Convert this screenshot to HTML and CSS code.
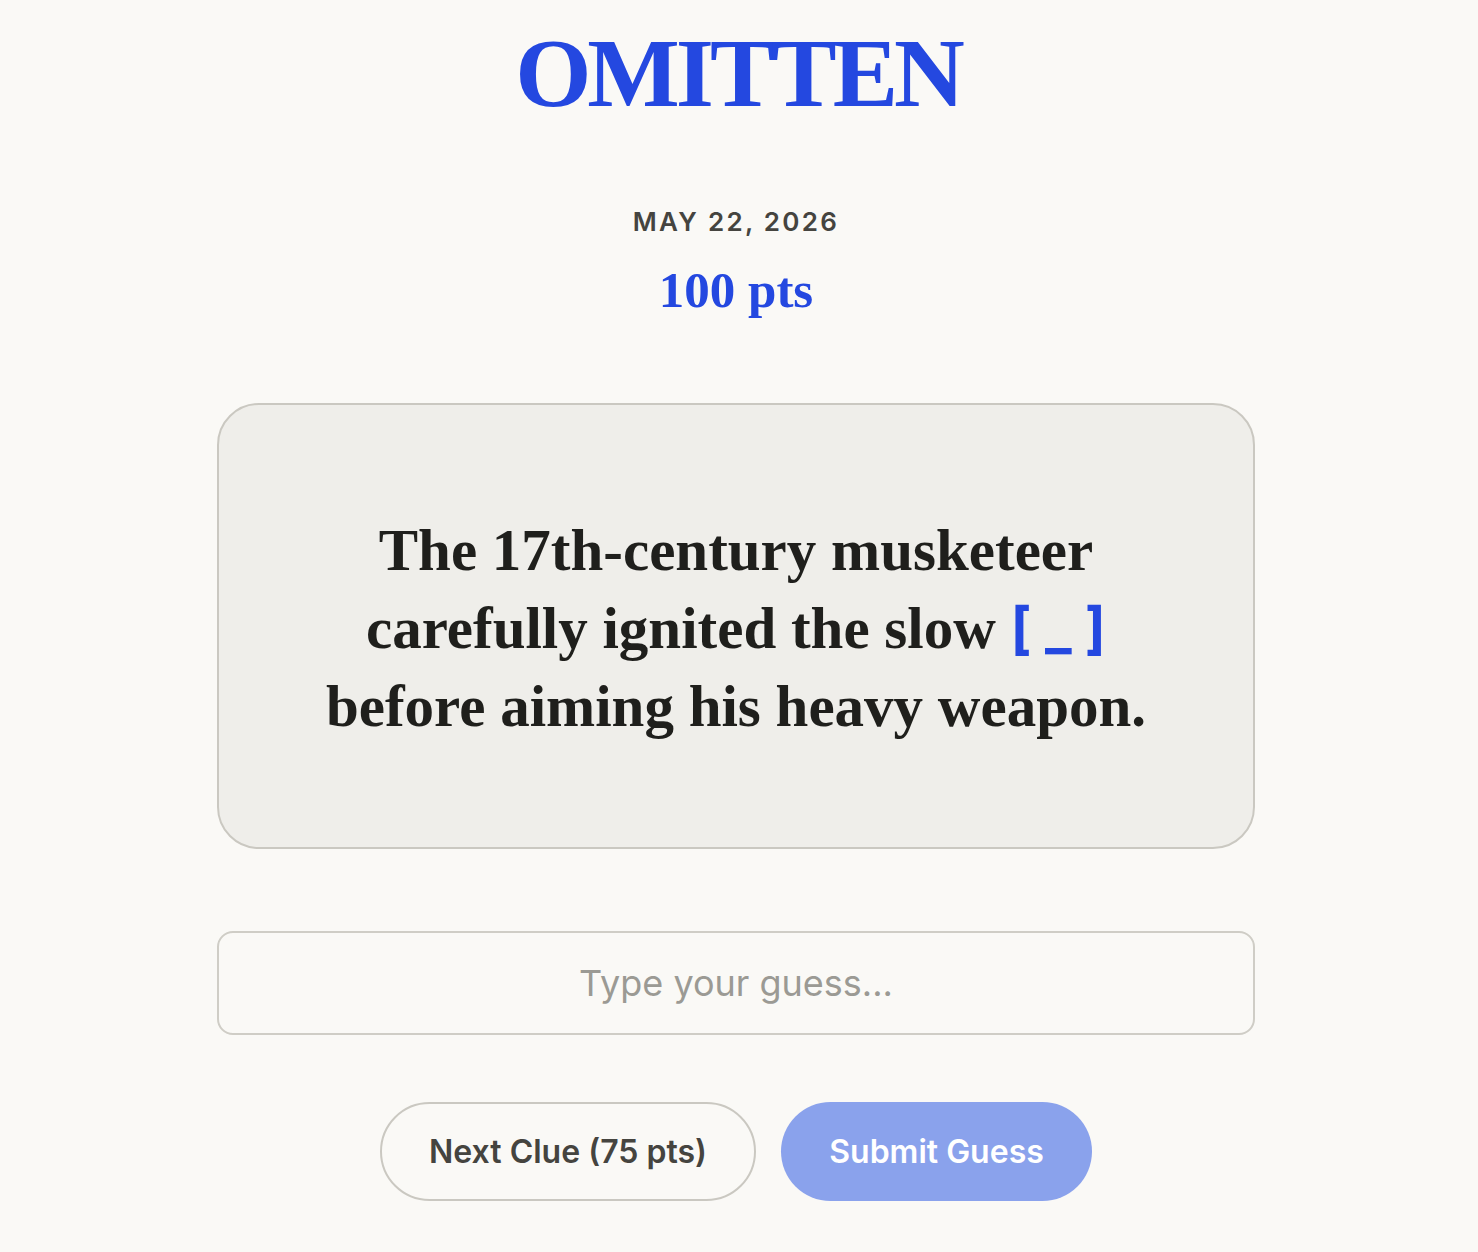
FILE: index.html
```html
<!DOCTYPE html>
<html lang="en">
<head>
<meta charset="utf-8">
<title>Omitten</title>
<link rel="stylesheet" href="styles.css">
</head>
<body>
<main class="page">
  <h1 class="logo">OMITTEN</h1>
  <div class="meta">
    <div class="date">MAY 22, 2026</div>
    <div class="points">100 pts</div>
  </div>
  <section class="card">
    <p class="clue">The 17th-century musketeer<br>carefully ignited the slow <span class="blank">[ _ ]</span><br>before aiming his heavy weapon.</p>
  </section>
  <input class="guess" type="text" placeholder="Type your guess...">
  <div class="actions">
    <button class="btn btn-secondary">Next Clue (75 pts)</button>
    <button class="btn btn-primary">Submit Guess</button>
  </div>
</main>
</body>
</html>
```

FILE: styles.css
```css
html, body {
  margin: 0;
  padding: 0;
  background: #faf9f6;
}

body {
  font-family: Inter, "Noto Sans", sans-serif;
  color: #1f1f1c;
  padding-right: 6px;
}

.page {
  width: 1038px;
  margin: 0 auto;
  display: flex;
  flex-direction: column;
  align-items: center;
  padding-top: 20px;
}

.logo {
  margin: 0;
  font-family: "Liberation Serif", "Times New Roman", serif;
  font-weight: 700;
  font-size: 98px;
  line-height: 106px;
  letter-spacing: -4px;
  padding-left: 4px;
  color: #2448e0;
}

.meta {
  display: flex;
  flex-direction: column;
  align-items: center;
  margin-top: 80px;
  gap: 24px;
}

.date {
  font-size: 26px;
  font-weight: 600;
  letter-spacing: 2.3px;
  color: #45443f;
  line-height: 32px;
}

.points {
  font-family: "Liberation Serif", "Times New Roman", serif;
  font-weight: 700;
  font-size: 51px;
  line-height: 56px;
  color: #2448e0;
}

.card {
  box-sizing: border-box;
  width: 100%;
  height: 446px;
  margin-top: 85px;
  border: 2px solid #cac8c1;
  border-radius: 42px;
  background: #efeeea;
  display: flex;
  align-items: center;
  justify-content: center;
}

.clue {
  margin: 0;
  text-align: center;
  font-family: "Liberation Serif", "Times New Roman", serif;
  font-weight: 700;
  font-size: 59px;
  line-height: 78px;
  color: #1f1f1c;
  padding-top: 4px;
}

.blank {
  font-family: Inter, "Noto Sans", sans-serif;
  font-weight: 700;
  color: #2448e0;
  font-size: 56px;
}

.guess {
  box-sizing: border-box;
  width: 100%;
  height: 104px;
  margin-top: 82px;
  border: 2px solid #cfcdc6;
  border-radius: 16px;
  background: #faf9f6;
  font-family: Inter, "Noto Sans", sans-serif;
  font-size: 36px;
  text-align: center;
  color: #1f1f1c;
  outline: none;
}

.guess::placeholder {
  color: #9b9a94;
}

.actions {
  display: flex;
  gap: 25px;
  margin-top: 67px;
}

.btn {
  box-sizing: border-box;
  height: 99px;
  border-radius: 50px;
  font-family: Inter, "Noto Sans", sans-serif;
  font-size: 32px;
  font-weight: 600;
  padding: 0 40px;
  cursor: pointer;
}

.btn-secondary {
  width: 376px;
  background: #faf9f6;
  border: 2px solid #cac8c1;
  color: #45443f;
}

.btn-primary {
  width: 311px;
  background: #8aa2ec;
  border: none;
  color: #ffffff;
}
```
